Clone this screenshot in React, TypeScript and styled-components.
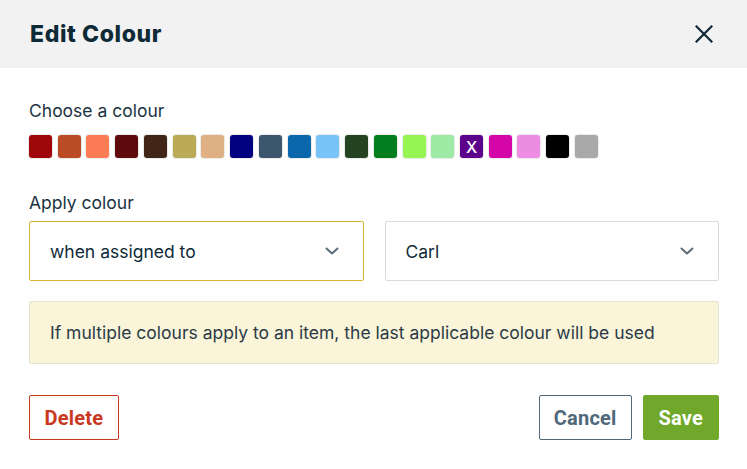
import styled, { createGlobalStyle } from "styled-components";

const GlobalStyle = createGlobalStyle`
  html, body {
    margin: 0;
    padding: 0;
    background: #ffffff;
  }
  body {
    font-family: Inter, "Noto Sans", sans-serif;
    color: #0f2a37;
  }
`;

const COLOURS = [
  "#a0070b",
  "#ba4c25",
  "#fe7c55",
  "#5f0b0e",
  "#412618",
  "#bbaa56",
  "#deb083",
  "#020180",
  "#3c566d",
  "#0b67ab",
  "#78c4f8",
  "#244421",
  "#037e1e",
  "#95f552",
  "#9ceaa4",
  "#5d038b",
  "#d406a8",
  "#ec8ce3",
  "#000000",
  "#a9a9a9",
];

const Dialog = styled.div`
  width: 747px;
  height: 469px;
  display: flex;
  flex-direction: column;
`;

const Header = styled.div`
  height: 68px;
  background: #f2f2f2;
  display: flex;
  align-items: center;
  justify-content: space-between;
  padding: 0 28px 0 30px;
  box-sizing: border-box;
`;

const Title = styled.h1`
  margin: 0;
  font-size: 23px;
  font-weight: 800;
  letter-spacing: 0.6px;
  color: #0f2a37;
`;

const CloseButton = styled.button`
  border: 0;
  background: none;
  padding: 0;
  width: 26px;
  height: 26px;
  display: flex;
  align-items: center;
  justify-content: center;
  cursor: pointer;
  margin-right: 2px;
`;

const Body = styled.div`
  padding: 32px 28px 0 29px;
  display: flex;
  flex-direction: column;
`;

const Label = styled.div<{ $gap: number }>`
  font-size: 17.5px;
  line-height: 21px;
  color: #1a3342;
  margin-bottom: ${(p) => p.$gap}px;
`;

const Swatches = styled.div`
  display: flex;
  gap: 5.74px;
  margin-bottom: 34px;
`;

const Swatch = styled.div<{ $colour: string }>`
  width: 23px;
  height: 23px;
  border-radius: 3px;
  background: ${(p) => p.$colour};
  box-shadow: 0 0 0 1px rgba(0, 0, 0, 0.08);
  display: flex;
  align-items: center;
  justify-content: center;
  color: #ffffff;
  font-size: 16px;
  font-weight: 500;
`;

const SelectRow = styled.div`
  display: flex;
  gap: 21px;
  margin-bottom: 20px;
`;

const Select = styled.div<{ $focused?: boolean }>`
  flex: 1;
  height: 60px;
  box-sizing: border-box;
  border: 1px solid ${(p) => (p.$focused ? "#d8b72c" : "#dcdcdc")};
  border-radius: 2px;
  display: flex;
  align-items: center;
  justify-content: space-between;
  padding: 0 24px 0 20px;
  font-size: 17.5px;
  color: #0f2a37;
`;

const Notice = styled.div`
  height: 63px;
  box-sizing: border-box;
  background: #faf4d9;
  border: 1px solid #e8e3cc;
  border-radius: 2px;
  display: flex;
  align-items: center;
  padding: 0 20px;
  font-size: 17.5px;
  color: #2b3b46;
  margin-bottom: 31px;
`;

const Footer = styled.div`
  display: flex;
  align-items: center;
  justify-content: space-between;
`;

const ButtonGroup = styled.div`
  display: flex;
  gap: 11px;
`;

const Button = styled.button<{ $variant: "danger" | "secondary" | "primary" }>`
  height: 45px;
  box-sizing: border-box;
  padding: 0 ${(p) => (p.$variant === "danger" ? 14.5 : p.$variant === "secondary" ? 14 : 15)}px;
  border-radius: 2px;
  font-family: Roboto, "Liberation Sans", sans-serif;
  font-size: 20px;
  font-weight: 700;
  letter-spacing: 0.2px;
  cursor: pointer;
  border: 1px solid
    ${(p) =>
      p.$variant === "danger"
        ? "#c9391f"
        : p.$variant === "secondary"
        ? "#50687a"
        : "#70a82b"};
  background: ${(p) => (p.$variant === "primary" ? "#70a82b" : "#ffffff")};
  color: ${(p) =>
    p.$variant === "danger"
      ? "#c9391f"
      : p.$variant === "secondary"
      ? "#50687a"
      : "#ffffff"};
`;

function Chevron() {
  return (
    <svg width="14" height="8" viewBox="0 0 14 8" fill="none">
      <polyline
        points="1.5,1.5 7,6.5 12.5,1.5"
        stroke="#5b6b77"
        strokeWidth="2"
        strokeLinecap="round"
        strokeLinejoin="round"
      />
    </svg>
  );
}

export default function App() {
  return (
    <Dialog>
      <GlobalStyle />
      <Header>
        <Title>Edit Colour</Title>
        <CloseButton aria-label="Close">
          <svg width="18" height="18" viewBox="0 0 18 18">
            <path
              d="M1.5 1.5 L16.5 16.5 M16.5 1.5 L1.5 16.5"
              stroke="#0f2a37"
              strokeWidth="2.2"
              strokeLinecap="square"
            />
          </svg>
        </CloseButton>
      </Header>
      <Body>
        <Label $gap={14}>Choose a colour</Label>
        <Swatches>
          {COLOURS.map((c) => (
            <Swatch key={c} $colour={c}>
              {c === "#5d038b" ? "X" : null}
            </Swatch>
          ))}
        </Swatches>
        <Label $gap={8}>Apply colour</Label>
        <SelectRow>
          <Select $focused>
            <span>when assigned to</span>
            <Chevron />
          </Select>
          <Select>
            <span>Carl</span>
            <Chevron />
          </Select>
        </SelectRow>
        <Notice>
          If multiple colours apply to an item, the last applicable colour will be used
        </Notice>
        <Footer>
          <Button $variant="danger">Delete</Button>
          <ButtonGroup>
            <Button $variant="secondary">Cancel</Button>
            <Button $variant="primary">Save</Button>
          </ButtonGroup>
        </Footer>
      </Body>
    </Dialog>
  );
}
